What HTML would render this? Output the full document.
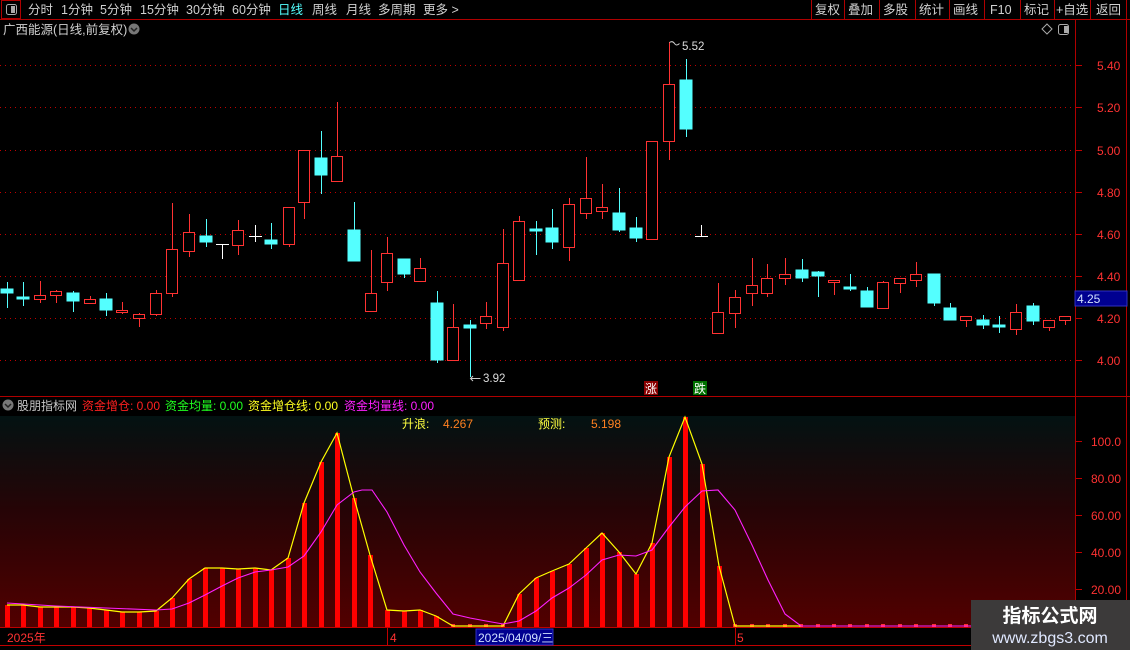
<!DOCTYPE html>
<html><head><meta charset="utf-8"><style>
html,body{margin:0;padding:0;background:#000;width:1130px;height:650px;overflow:hidden}
svg{display:block}
text{font-family:"Liberation Sans","Noto Sans CJK SC",sans-serif}
</style></head><body>
<svg width="1130" height="650" viewBox="0 0 1130 650" xmlns="http://www.w3.org/2000/svg">
<defs>
<linearGradient id="g" x1="0" y1="0" x2="0" y2="1">
<stop offset="0" stop-color="#031212"/><stop offset="0.45" stop-color="#260406"/><stop offset="1" stop-color="#520000"/>
</linearGradient>
</defs>
<rect width="1130" height="650" fill="#000"/>
<!-- toolbar -->
<g font-size="12.5" fill="#d0d0d0">
<rect x="1.5" y="0.5" width="19" height="18" fill="none" stroke="#b00000"/>
<rect x="6.5" y="4.5" width="10" height="10" rx="2" fill="none" stroke="#aaa"/><rect x="11" y="6" width="4" height="7" fill="#aaa"/>
<text x="28" y="14">分时</text><text x="61" y="14">1分钟</text><text x="100" y="14">5分钟</text><text x="140" y="14">15分钟</text><text x="186" y="14">30分钟</text><text x="232" y="14">60分钟</text>
<text x="278" y="14" fill="#54ffff">日线</text><text x="312" y="14">周线</text><text x="346" y="14">月线</text><text x="378" y="14">多周期</text><text x="423" y="14">更多 &gt;</text>
<text x="815" y="14">复权</text><text x="848" y="14">叠加</text><text x="883" y="14">多股</text><text x="919" y="14">统计</text><text x="953" y="14">画线</text><text x="990" y="14">F10</text><text x="1024" y="14">标记</text><text x="1056" y="14">+自选</text><text x="1096" y="14">返回</text>
</g>
<g stroke="#b00000" stroke-width="1">
<line x1="0" y1="19.5" x2="1130" y2="19.5"/>
<line x1="811.5" y1="0" x2="811.5" y2="19"/><line x1="844.5" y1="0" x2="844.5" y2="19"/><line x1="879.5" y1="0" x2="879.5" y2="19"/><line x1="915.5" y1="0" x2="915.5" y2="19"/><line x1="949.5" y1="0" x2="949.5" y2="19"/><line x1="984.5" y1="0" x2="984.5" y2="19"/><line x1="1020.5" y1="0" x2="1020.5" y2="19"/><line x1="1054.5" y1="0" x2="1054.5" y2="19"/><line x1="1090.5" y1="0" x2="1090.5" y2="19"/><line x1="1126.5" y1="0" x2="1126.5" y2="650"/>
<line x1="1075.5" y1="20" x2="1075.5" y2="628"/>
<line x1="0" y1="396.5" x2="1130" y2="396.5"/>
</g>
<text x="3" y="34" font-size="12.5" fill="#d0d0d0">广西能源(日线,前复权)</text>
<circle cx="134" cy="29" r="5.5" fill="#777"/><path d="M131 28l3 3 3-3" stroke="#222" stroke-width="1.5" fill="none"/>
<path d="M1047 24l5 5-5 5-5-5z" fill="none" stroke="#aaa"/>
<rect x="1058.5" y="24.5" width="10" height="10" rx="2" fill="none" stroke="#aaa"/><rect x="1064" y="26" width="4" height="7" fill="#aaa"/>
<!-- grid -->
<g stroke="#c00000" stroke-dasharray="1 4">
<line x1="0" y1="65.5" x2="1075" y2="65.5"/><line x1="0" y1="107.5" x2="1075" y2="107.5"/><line x1="0" y1="150.5" x2="1075" y2="150.5"/><line x1="0" y1="192.5" x2="1075" y2="192.5"/><line x1="0" y1="234.5" x2="1075" y2="234.5"/><line x1="0" y1="276.5" x2="1075" y2="276.5"/><line x1="0" y1="318.5" x2="1075" y2="318.5"/><line x1="0" y1="360.5" x2="1075" y2="360.5"/>
</g>
<g font-size="12" fill="#ff3232">
<text x="1097" y="70">5.40</text><text x="1097" y="112">5.20</text><text x="1097" y="155">5.00</text><text x="1097" y="197">4.80</text><text x="1097" y="239">4.60</text><text x="1097" y="281">4.40</text><text x="1097" y="323">4.20</text><text x="1097" y="365">4.00</text>
</g>
<g stroke="#c00000"><line x1="1076" y1="65.5" x2="1082" y2="65.5"/><line x1="1076" y1="107.5" x2="1082" y2="107.5"/><line x1="1076" y1="150.5" x2="1082" y2="150.5"/><line x1="1076" y1="192.5" x2="1082" y2="192.5"/><line x1="1076" y1="234.5" x2="1082" y2="234.5"/><line x1="1076" y1="276.5" x2="1082" y2="276.5"/><line x1="1076" y1="318.5" x2="1082" y2="318.5"/><line x1="1076" y1="360.5" x2="1082" y2="360.5"/></g>
<rect x="1075" y="291" width="52" height="15" fill="#000090" stroke="#3030c0"/>
<text x="1077" y="303" font-size="12" fill="#d0e0ff">4.25</text>
<!-- candles -->
<g stroke="#54ffff" fill="#54ffff">
<line x1="7.5" y1="282" x2="7.5" y2="308"/><rect x="1" y="289" width="12" height="4"/>
<line x1="23.5" y1="282" x2="23.5" y2="306"/><rect x="17" y="297" width="12" height="2"/>
<line x1="73.5" y1="291" x2="73.5" y2="312"/><rect x="67" y="293" width="12" height="8"/>
<line x1="106.5" y1="293" x2="106.5" y2="316"/><rect x="100" y="299" width="12" height="11"/>
<line x1="206.5" y1="219" x2="206.5" y2="247"/><rect x="200" y="236" width="12" height="6"/>
<line x1="271.5" y1="223" x2="271.5" y2="249"/><rect x="265" y="240" width="12" height="4"/>
<line x1="321.5" y1="131" x2="321.5" y2="194"/><rect x="315" y="158" width="12" height="17"/>
<line x1="354.5" y1="202" x2="354.5" y2="261"/><rect x="348" y="230" width="12" height="31"/>
<line x1="404.5" y1="259" x2="404.5" y2="278"/><rect x="398" y="259" width="12" height="15"/>
<line x1="437.5" y1="291" x2="437.5" y2="363"/><rect x="431" y="303" width="12" height="57"/>
<line x1="470.5" y1="320" x2="470.5" y2="377"/><rect x="464" y="325" width="12" height="3"/>
<line x1="536.5" y1="221" x2="536.5" y2="255"/><rect x="530" y="229" width="12" height="2"/>
<line x1="552.5" y1="209" x2="552.5" y2="249"/><rect x="546" y="228" width="12" height="14"/>
<line x1="619.5" y1="188" x2="619.5" y2="232"/><rect x="613" y="213" width="12" height="17"/>
<line x1="636.5" y1="217" x2="636.5" y2="242"/><rect x="630" y="228" width="12" height="10"/>
<line x1="686.5" y1="59" x2="686.5" y2="137"/><rect x="680" y="80" width="12" height="49"/>
<line x1="802.5" y1="259" x2="802.5" y2="282"/><rect x="796" y="270" width="12" height="8"/>
<line x1="818.5" y1="271" x2="818.5" y2="297"/><rect x="812" y="272" width="12" height="4"/>
<line x1="850.5" y1="274" x2="850.5" y2="291"/><rect x="844" y="287" width="12" height="2"/>
<line x1="867.5" y1="287" x2="867.5" y2="307"/><rect x="861" y="291" width="12" height="16"/>
<line x1="934.5" y1="274" x2="934.5" y2="306"/><rect x="928" y="274" width="12" height="29"/>
<line x1="950.5" y1="303" x2="950.5" y2="320"/><rect x="944" y="308" width="12" height="12"/>
<line x1="983.5" y1="315" x2="983.5" y2="329"/><rect x="977" y="320" width="12" height="5"/>
<line x1="999.5" y1="316" x2="999.5" y2="333"/><rect x="993" y="325" width="12" height="2"/>
<line x1="1033.5" y1="303" x2="1033.5" y2="325"/><rect x="1027" y="306" width="12" height="15"/>
</g>
<g stroke="#ff3232" fill="#000">
<line x1="40.5" y1="281" x2="40.5" y2="303"/><rect x="34.5" y="295.5" width="11" height="4"/>
<line x1="56.5" y1="290" x2="56.5" y2="303"/><rect x="50.5" y="291.5" width="11" height="4"/>
<line x1="90.5" y1="296" x2="90.5" y2="303"/><rect x="84.5" y="299.5" width="11" height="4"/>
<line x1="122.5" y1="302" x2="122.5" y2="314"/><rect x="116.5" y="310.5" width="11" height="2"/>
<line x1="139.5" y1="313" x2="139.5" y2="327"/><rect x="133.5" y="314.5" width="11" height="4"/>
<line x1="156.5" y1="290" x2="156.5" y2="316"/><rect x="150.5" y="293.5" width="11" height="21"/>
<line x1="172.5" y1="203" x2="172.5" y2="297"/><rect x="166.5" y="249.5" width="11" height="44"/>
<line x1="189.5" y1="214" x2="189.5" y2="257"/><rect x="183.5" y="232.5" width="11" height="19"/>
<line x1="238.5" y1="220" x2="238.5" y2="255"/><rect x="232.5" y="230.5" width="11" height="15"/>
<line x1="289.5" y1="207" x2="289.5" y2="247"/><rect x="283.5" y="207.5" width="11" height="37"/>
<line x1="304.5" y1="150" x2="304.5" y2="219"/><rect x="298.5" y="150.5" width="11" height="52"/>
<line x1="337.5" y1="102" x2="337.5" y2="181"/><rect x="331.5" y="156.5" width="11" height="25"/>
<line x1="371.5" y1="250" x2="371.5" y2="311"/><rect x="365.5" y="293.5" width="11" height="18"/>
<line x1="387.5" y1="237" x2="387.5" y2="291"/><rect x="381.5" y="253.5" width="11" height="29"/>
<line x1="420.5" y1="258" x2="420.5" y2="282"/><rect x="414.5" y="268.5" width="11" height="13"/>
<line x1="453.5" y1="304" x2="453.5" y2="360"/><rect x="447.5" y="327.5" width="11" height="33"/>
<line x1="486.5" y1="302" x2="486.5" y2="329"/><rect x="480.5" y="316.5" width="11" height="7"/>
<line x1="503.5" y1="229" x2="503.5" y2="331"/><rect x="497.5" y="263.5" width="11" height="64"/>
<line x1="519.5" y1="216" x2="519.5" y2="280"/><rect x="513.5" y="221.5" width="11" height="59"/>
<line x1="569.5" y1="198" x2="569.5" y2="261"/><rect x="563.5" y="204.5" width="11" height="43"/>
<line x1="586.5" y1="157" x2="586.5" y2="219"/><rect x="580.5" y="198.5" width="11" height="15"/>
<line x1="602.5" y1="184" x2="602.5" y2="219"/><rect x="596.5" y="207.5" width="11" height="4"/>
<rect x="646.5" y="141.5" width="11" height="98"/>
<line x1="669.5" y1="42" x2="669.5" y2="160"/><rect x="663.5" y="84.5" width="11" height="57"/>
<line x1="718.5" y1="283" x2="718.5" y2="333"/><rect x="712.5" y="312.5" width="11" height="21"/>
<line x1="735.5" y1="290" x2="735.5" y2="328"/><rect x="729.5" y="297.5" width="11" height="16"/>
<line x1="752.5" y1="258" x2="752.5" y2="306"/><rect x="746.5" y="285.5" width="11" height="8"/>
<line x1="767.5" y1="264" x2="767.5" y2="297"/><rect x="761.5" y="278.5" width="11" height="15"/>
<line x1="785.5" y1="258" x2="785.5" y2="285"/><rect x="779.5" y="274.5" width="11" height="4"/>
<line x1="834.5" y1="280" x2="834.5" y2="295"/><rect x="828.5" y="280.5" width="11" height="2"/>
<line x1="883.5" y1="281" x2="883.5" y2="308"/><rect x="877.5" y="282.5" width="11" height="26"/>
<line x1="900.5" y1="278" x2="900.5" y2="293"/><rect x="894.5" y="278.5" width="11" height="5"/>
<line x1="916.5" y1="262" x2="916.5" y2="287"/><rect x="910.5" y="274.5" width="11" height="6"/>
<line x1="966.5" y1="316" x2="966.5" y2="327"/><rect x="960.5" y="316.5" width="11" height="4"/>
<line x1="1016.5" y1="304" x2="1016.5" y2="335"/><rect x="1010.5" y="312.5" width="11" height="17"/>
<line x1="1049.5" y1="320" x2="1049.5" y2="331"/><rect x="1043.5" y="320.5" width="11" height="7"/>
<line x1="1065.5" y1="316" x2="1065.5" y2="325"/><rect x="1059.5" y="316.5" width="11" height="4"/>
</g>
<g stroke="#fff">
<line x1="216" y1="244.5" x2="229" y2="244.5"/><line x1="222.5" y1="244" x2="222.5" y2="259"/>
<line x1="249" y1="236.5" x2="262" y2="236.5"/><line x1="255.5" y1="225" x2="255.5" y2="242"/>
<line x1="695" y1="236.5" x2="708" y2="236.5"/><line x1="701.5" y1="225" x2="701.5" y2="236"/>
</g>
<g stroke="#ccc" fill="none"><path d="M470.5 378.5h10M473 376l-2.5 2.5 2.5 2.5"/><path d="M669.5 42.5q3 -2 5 1t5 0"/></g>
<text x="483" y="382" font-size="11.5" fill="#ddd">3.92</text>
<text x="682" y="50" font-size="11.5" fill="#ddd">5.52</text>
<rect x="644" y="381" width="14" height="14" fill="#8a0000"/><text x="645" y="393" font-size="12" fill="#fff">涨</text>
<rect x="693" y="381" width="14" height="14" fill="#007000"/><text x="694" y="393" font-size="12" fill="#fff">跌</text>
<!-- indicator header -->
<circle cx="8" cy="405" r="5.5" fill="#777"/><path d="M5 404l3 3 3-3" stroke="#222" stroke-width="1.5" fill="none"/>
<g font-size="12">
<text x="17" y="410" fill="#c8c8c8">股朋指标网</text>
<text x="82" y="410" fill="#ff2020">资金增仓: 0.00</text>
<text x="165" y="410" fill="#20ff20">资金均量: 0.00</text>
<text x="248" y="410" fill="#ffff20">资金增仓线: 0.00</text>
<text x="344" y="410" fill="#ff20ff">资金均量线: 0.00</text>
</g>
<rect x="0" y="416" width="1075" height="211" fill="url(#g)"/>
<text x="402" y="428" font-size="12" fill="#ffff40">升浪:</text><text x="443" y="428" font-size="12" fill="#ff8020">4.267</text>
<text x="538" y="428" font-size="12" fill="#ffff40">预测:</text><text x="591" y="428" font-size="12" fill="#ff8020">5.198</text>
<g font-size="12" fill="#ff3232"><text x="1091" y="446">100.0</text><text x="1091" y="483">80.00</text><text x="1091" y="520">60.00</text><text x="1091" y="557">40.00</text><text x="1091" y="594">20.00</text></g>
<g stroke="#c00000"><line x1="1076" y1="441.5" x2="1082" y2="441.5"/><line x1="1076" y1="478.5" x2="1082" y2="478.5"/><line x1="1076" y1="515.5" x2="1082" y2="515.5"/><line x1="1076" y1="552.5" x2="1082" y2="552.5"/><line x1="1076" y1="589.5" x2="1082" y2="589.5"/></g>
<!-- bars -->
<g fill="#ff0000">
<rect x="5" y="605" width="5" height="22"/><rect x="21" y="605" width="5" height="22"/><rect x="38" y="607" width="5" height="20"/><rect x="54" y="607" width="5" height="20"/><rect x="71" y="607" width="5" height="20"/><rect x="87" y="608" width="5" height="19"/><rect x="104" y="610" width="5" height="17"/><rect x="120" y="612" width="5" height="15"/><rect x="137" y="612" width="5" height="15"/><rect x="154" y="611" width="5" height="16"/><rect x="170" y="598" width="5" height="29"/><rect x="187" y="579" width="5" height="48"/><rect x="203" y="568" width="5" height="59"/><rect x="220" y="568" width="5" height="59"/><rect x="236" y="569" width="5" height="58"/><rect x="253" y="568" width="5" height="59"/><rect x="269" y="570" width="5" height="57"/><rect x="286" y="558" width="5" height="69"/><rect x="302" y="503" width="5" height="124"/><rect x="319" y="462" width="5" height="165"/><rect x="335" y="433" width="5" height="194"/><rect x="352" y="498" width="5" height="129"/><rect x="368" y="555" width="5" height="72"/><rect x="385" y="610" width="5" height="17"/><rect x="402" y="611" width="5" height="16"/><rect x="418" y="610" width="5" height="17"/><rect x="434" y="616" width="5" height="11"/>
<rect x="517" y="594" width="5" height="33"/><rect x="534" y="578" width="5" height="49"/><rect x="550" y="571" width="5" height="56"/><rect x="567" y="564" width="5" height="63"/><rect x="584" y="548" width="5" height="79"/><rect x="600" y="533" width="5" height="94"/><rect x="617" y="552" width="5" height="75"/><rect x="634" y="574" width="5" height="53"/><rect x="650" y="543" width="5" height="84"/><rect x="667" y="457" width="5" height="170"/><rect x="683" y="417" width="5" height="210"/><rect x="700" y="464" width="5" height="163"/><rect x="717" y="566" width="5" height="61"/>
</g>
<g fill="#ff3030">
<rect x="451" y="624" width="4" height="3"/><rect x="468" y="624" width="4" height="3"/><rect x="484" y="624" width="4" height="3"/><rect x="501" y="624" width="4" height="3"/><rect x="733" y="624" width="4" height="3"/><rect x="750" y="624" width="4" height="3"/><rect x="766" y="624" width="4" height="3"/><rect x="783" y="624" width="4" height="3"/><rect x="799" y="624" width="4" height="3"/><rect x="816" y="624" width="4" height="3"/><rect x="832" y="624" width="4" height="3"/><rect x="848" y="624" width="4" height="3"/><rect x="865" y="624" width="4" height="3"/><rect x="881" y="624" width="4" height="3"/><rect x="898" y="624" width="4" height="3"/><rect x="914" y="624" width="4" height="3"/><rect x="932" y="624" width="4" height="3"/><rect x="948" y="624" width="4" height="3"/><rect x="964" y="624" width="4" height="3"/>
</g>
<polyline fill="none" stroke="#ffff00" stroke-width="1.2" points="7,605 23,605 40,607 56,607 73,607 89,608 106,610 122,612 139,612 156,611 172,598 189,579 205,568 222,568 238,569 255,568 271,570 288,558 304,503 321,462 337,433 354,498 370,555 387,610 404,611 420,610 436,616 453,626 470,626 486,626 503,626 519,594 536,578 552,571 569,564 586,548 602,533 619,552 636,574 652,543 669,457 685,417 702,464 719,566 735,626 801,626"/>
<polyline fill="none" stroke="#ff20ff" stroke-width="1.1" points="7,603 56,606 106,608 156,610 172,609 189,603 205,595 222,586 238,578 255,572 271,570 288,567 304,556 321,532 337,505 354,492 362,490 372,490 387,512 404,545 420,572 436,593 453,614 470,618 486,621 503,624 519,621 536,611 552,598 569,588 586,575 602,560 619,555 636,556 652,550 669,527 685,507 702,491 718,490 735,510 752,545 768,580 785,614 801,626 1075,626"/>
<!-- date axis -->
<g stroke="#c00000"><line x1="0" y1="627.5" x2="1130" y2="627.5"/><line x1="0" y1="645.5" x2="1130" y2="645.5"/><line x1="387.5" y1="628" x2="387.5" y2="645"/><line x1="735.5" y1="628" x2="735.5" y2="645"/></g>
<text x="7" y="642" font-size="12" fill="#ff3232">2025年</text>
<text x="390" y="642" font-size="12" fill="#ff3232">4</text>
<rect x="476" y="629" width="77" height="16" fill="#000090" stroke="#3030c0"/>
<text x="478" y="642" font-size="12" fill="#d0e0ff">2025/04/09/三</text>
<text x="737" y="642" font-size="12" fill="#ff3232">5</text>
<!-- watermark -->
<rect x="971" y="600" width="159" height="50" fill="#3c3a3a"/>
<text x="1050" y="622" font-size="19" font-weight="bold" fill="#fff" text-anchor="middle">指标公式网</text>
<text x="1050" y="643" font-size="16" fill="#e0e8ff" text-anchor="middle">www.zbgs3.com</text>
</svg>
</body></html>
